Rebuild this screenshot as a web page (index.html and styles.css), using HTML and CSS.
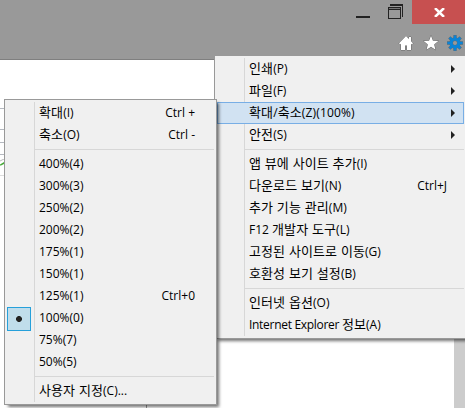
FILE: index.html
```html
<!DOCTYPE html>
<html lang="ko">
<head>
<meta charset="utf-8">
<title>Internet Explorer</title>
<link rel="stylesheet" href="styles.css">
</head>
<body>
<div class="window">
  <header class="chrome">
    <div class="caption">
      <svg class="min" width="14" height="2" viewBox="0 0 14 2"><path d="M0 0h14v2H0z" fill="#222"/></svg>
      <svg class="restore" width="15" height="15" viewBox="0 0 15 15" shape-rendering="crispEdges"><path d="M0 3h13v12H0zM1 6v8h11V6z" fill="#222" fill-rule="evenodd"/><path d="M2 0h13v13h-1V2H2z" fill="#222"/><path d="M1 4h11v1H1z" fill="#777"/></svg>
      <div class="close"><svg width="11" height="9" viewBox="0 0 11 9"><path d="M1 0 10 9M10 0 1 9" stroke="#fff" stroke-width="2.500" fill="none"/></svg></div>
    </div>
    <div class="tools">
      <svg width="16" height="16" viewBox="0 0 16 16"><path d="M8 1 1 8.200l1.200 1.300L3 8.800V15h4v-4.500h2V15h4V8.800l.8.7L15 8.200l-2-2V2h-2v2z" fill="#fff" stroke="#666" stroke-width="1" paint-order="stroke" stroke-linejoin="round"/></svg>
      <svg width="16" height="16" viewBox="0 0 16 16"><path d="m8 .7 1.900 5.100 5.400.2-4.200 3.400 1.400 5.400L8 11.800l-4.500 3 1.400-5.400L.7 6l5.400-.2z" fill="#fff" stroke="#666" stroke-width="1" paint-order="stroke" stroke-linejoin="round"/></svg>
      <svg width="16" height="16" viewBox="0 0 16 16"><g transform="translate(8 8)" fill="none"><path d="M0-8V-5M0 8V5M-8 0H-5M8 0H5M-5.700-5.700l2.500 2.500M5.700-5.700l-2.500 2.500M-5.700 5.700l2.500-2.500M5.700 5.700l-2.500-2.500" stroke="#5c6d7a" stroke-width="3.300"/><circle r="3.900" stroke="#5c6d7a" stroke-width="3.700"/><path d="M0-7.600V-5M0 7.600V5M-7.600 0H-5M7.600 0H5M-5.300-5.300l2.200 2.200M5.300-5.300l-2.200 2.200M-5.300 5.300l2.200-2.200M5.300 5.300l-2.200-2.200" stroke="#0a84d8" stroke-width="2.500"/><circle r="3.900" stroke="#0a84d8" stroke-width="2.900"/></g></svg>
    </div>
  </header>
  <main class="page">
    <div class="rows"><i></i><i></i><i></i><i></i><svg width="4" height="7" viewBox="0 0 4 7"><path d="M0 5.500 4 3v2L1 6.500H0z" fill="#45a936"/><path d="M0 2 4 0" stroke="#bbb"/></svg><i></i><div class="edge"></div></div>
    <div class="scroll"></div>
  </main>

  <nav class="menu main">
    <div class="item"><span><em>인쇄</em>(P)</span><b></b></div>
    <div class="item"><span><em>파일</em>(F)</span><b></b></div>
    <div class="item active"><span><em>확대</em>/<em>축소</em>(Z)(100%)</span><b></b></div>
    <div class="item"><span><em>안전</em>(S)</span><b></b></div>
    <hr>
    <div class="item"><span><em>앱 뷰에 사이트 추가</em>(I)</span></div>
    <div class="item"><span><em>다운로드 보기</em>(N)</span><kbd>Ctrl+J</kbd></div>
    <div class="item"><span><em>추가 기능 관리</em>(M)</span></div>
    <div class="item"><span>F12 <em>개발자 도구</em>(L)</span></div>
    <div class="item"><span><em>고정된 사이트로 이동</em>(G)</span></div>
    <div class="item"><span><em>호환성 보기 설정</em>(B)</span></div>
    <hr>
    <div class="item"><span><em>인터넷 옵션</em>(O)</span></div>
    <div class="item"><span><span class="latin">Internet Explorer </span><em>정보</em>(A)</span></div>
  </nav>

  <nav class="menu sub">
    <div class="item"><span><em>확대</em>(I)</span><kbd>Ctrl +</kbd></div>
    <div class="item"><span><em>축소</em>(O)</span><kbd>Ctrl -</kbd></div>
    <hr>
    <div class="item"><span>400%(4)</span></div>
    <div class="item"><span>300%(3)</span></div>
    <div class="item"><span>250%(2)</span></div>
    <div class="item"><span>200%(2)</span></div>
    <div class="item"><span>175%(1)</span></div>
    <div class="item"><span>150%(1)</span></div>
    <div class="item"><span>125%(1)</span><kbd>Ctrl+0</kbd></div>
    <div class="item checked"><span>100%(0)</span></div>
    <div class="item"><span>75%(7)</span></div>
    <div class="item"><span>50%(5)</span></div>
    <hr>
    <div class="item"><span><em>사용자 지정</em>(C)...</span></div>
  </nav>
</div>
</body>
</html>
```
FILE: styles.css
```css
* { box-sizing: border-box; }
body { margin: 0; }
.window {
  position: relative;
  width: 465px;
  height: 408px;
  overflow: hidden;
  display: flex;
  flex-direction: column;
  font: 12px/22px "Open Sans", "Noto Sans CJK KR", sans-serif;
  color: #000;
}
.chrome {
  height: 60px;
  background: #999;
  border-bottom: 1px solid #7f7f7f;
}
.caption { display: flex; justify-content: flex-end; height: 24px; }
.min { margin: 16px 18px 0 0; }
.restore { margin: 4px 9px 0 0; }
.close {
  width: 53px;
  background: #c75050;
  display: flex;
  align-items: center;
  justify-content: center;
  padding-left: 2px;
}
.tools { display: flex; justify-content: flex-end; gap: 8px; padding: 11px 2px 0 0; }
.tools svg { overflow: visible; }
.tools svg:first-child { margin-right: 1px; }
.page { flex: 1; display: flex; justify-content: space-between; background: #fff; }
.scroll { width: 11px; background: #ccc; }
.rows { display: flex; flex-direction: column; width: 147px; padding-top: 48px; }
.rows i { height: 1px; margin-bottom: 20px; background: #b5b9c0; }
.rows i:nth-child(2) { margin-bottom: 12px; }
.rows i:nth-child(3) { margin-bottom: 11px; }
.rows i:nth-child(4) { margin-bottom: 4px; }
.rows svg { margin-bottom: 9px; }
.rows svg + i { background: #ddd; }
.edge { flex: 1; border-right: 1px solid #999; }

.menu {
  position: absolute;
  padding: 2px;
  background: linear-gradient(#d7d7d7, #d7d7d7) 29px 2px / 1px calc(100% - 4px) no-repeat #f0f0f0;
  border: 1px solid #999;
  box-shadow: 3px 3px 3px -1px rgba(0, 0, 0, .55);
}
.main { left: 214px; top: 55px; width: 253px; height: 284px; }
.sub { left: 4px; top: 99px; width: 213px; height: 306px; }
.item {
  display: flex;
  justify-content: space-between;
  height: 22px;
  padding: 0 19px 0 32px;
  white-space: pre;
}
.item kbd { font: inherit; }
.item em { font-style: normal; font-size: 13px; line-height: 1; font-family: "Noto Sans CJK KR", sans-serif; letter-spacing: .1px; }
.active span { letter-spacing: .15px; }
.latin { letter-spacing: -.3px; }
.main .item { padding-right: 17px; }
.item b {
  align-self: center;
  margin-right: -8px;
  border-left: 4px solid #222;
  border-top: 4px solid transparent;
  border-bottom: 4px solid transparent;
}
.active {
  background: #d1e2f2;
  box-shadow: inset 0 0 0 1px #78aee5;
}
.menu hr { height: 1px; margin: 3px 0 3px 28px; border: 0; background: #d7d7d7; }
.checked { position: relative; }
.checked::before {
  content: "";
  position: absolute;
  left: 0;
  top: 0;
  width: 22px;
  height: 22px;
  border: 1px solid #26a0da;
  background: radial-gradient(circle, #222 2.6px, transparent 3.3px) #c0ddeb;
}
```
